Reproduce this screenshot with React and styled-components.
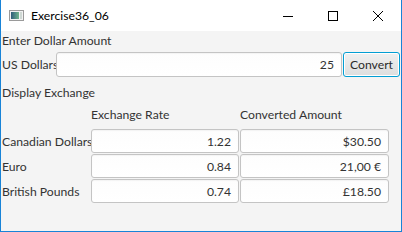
import { Fragment } from "react";
import styled, { createGlobalStyle } from "styled-components";

const GlobalStyle = createGlobalStyle`
  html, body {
    margin: 0;
    padding: 0;
    background: #ffffff;
  }
  * {
    box-sizing: border-box;
  }
`;

const Window = styled.div`
  width: 402px;
  height: 232px;
  border: 1px solid #1883d7;
  border-top: none;
  background: #f4f4f4;
  display: flex;
  flex-direction: column;
  font-family: Lato, "Noto Sans", sans-serif;
  font-size: 12.2px;
  color: #333333;
  overflow: hidden;
`;

const TitleBar = styled.div`
  height: 31px;
  background: #ffffff;
  display: flex;
  align-items: center;
  padding-left: 8px;
  padding-right: 1px;
`;

const AppIcon = styled.svg`
  width: 15px;
  height: 11px;
  margin-right: 7px;
`;

const Title = styled.span`
  flex: 1;
  color: #000000;
`;

const CaptionButton = styled.div`
  width: 45px;
  height: 30px;
  display: flex;
  align-items: center;
  justify-content: center;
`;

const Content = styled.div`
  padding: 0 0 0 1px;
  display: flex;
  flex-direction: column;
`;

const SectionLabel = styled.div`
  height: ${(p) => p.$h}px;
  display: flex;
  align-items: center;
`;

const InputRow = styled.div`
  display: flex;
  align-items: center;
  height: 25px;
  margin-top: 2px;
  margin-bottom: 6px;
`;

const RowLabel = styled.span`
  width: 54px;
  white-space: nowrap;
`;

const Field = styled.div`
  height: ${(p) => p.$h || 25}px;
  border: 1px solid #c4c4c4;
  border-radius: 3px;
  background: linear-gradient(#fdfdfd, #ffffff);
  box-shadow: inset 0 1px 1px rgba(0, 0, 0, 0.04);
  display: flex;
  align-items: center;
  justify-content: flex-end;
  padding-right: 7px;
  color: #333333;
`;

const AmountField = styled(Field)`
  flex: 1;
`;

const ConvertButton = styled.div`
  width: 57px;
  height: 25px;
  margin-left: 1px;
  margin-right: 1px;
  border: 1px solid #039ed3;
  border-radius: 3px;
  box-shadow: inset 0 0 0 1px #ffffff;
  background: linear-gradient(#f0f0f0, #dedede);
  display: flex;
  align-items: center;
  justify-content: center;
  color: #2a2a2a;
`;

const Grid = styled.div`
  display: grid;
  grid-template-columns: 88px 148px 149px;
  grid-auto-rows: 24px;
  column-gap: 1px;
  row-gap: 1px;
  margin-top: 2px;
`;

const Header = styled.div`
  display: flex;
  align-items: center;
  height: 20px;
`;

const CellLabel = styled.div`
  display: flex;
  align-items: center;
  white-space: nowrap;
`;

const rows = [
  { name: "Canadian Dollars", rate: "1.22", amount: "$30.50" },
  { name: "Euro", rate: "0.84", amount: "21,00 €" },
  { name: "British Pounds", rate: "0.74", amount: "£18.50" },
];

export default function App() {
  return (
    <>
      <GlobalStyle />
      <Window>
        <TitleBar>
          <AppIcon viewBox="0 0 15 11">
            <defs>
              <linearGradient id="pic" x1="0" x2="1" y1="0" y2="0">
                <stop offset="0" stopColor="#2f5d7a" />
                <stop offset="1" stopColor="#6fb58c" />
              </linearGradient>
            </defs>
            <rect x="0.5" y="0.5" width="14" height="10" fill="#f2f2f2" stroke="#9a9a9a" />
            <rect x="2" y="2" width="8" height="7" fill="url(#pic)" />
            <rect x="11" y="2" width="2" height="7" fill="#cfd8d4" />
          </AppIcon>
          <Title>Exercise36_06</Title>
          <CaptionButton>
            <svg width="10" height="10" viewBox="0 0 10 10">
              <line x1="0" y1="5.5" x2="10" y2="5.5" stroke="#000" strokeWidth="1" />
            </svg>
          </CaptionButton>
          <CaptionButton>
            <svg width="10" height="10" viewBox="0 0 10 10">
              <rect x="0.5" y="0.5" width="9" height="9" fill="none" stroke="#000" strokeWidth="1" />
            </svg>
          </CaptionButton>
          <CaptionButton>
            <svg width="10" height="10" viewBox="0 0 10 10">
              <path d="M0 0 L10 10 M10 0 L0 10" stroke="#000" strokeWidth="1" />
            </svg>
          </CaptionButton>
        </TitleBar>
        <Content>
          <SectionLabel $h={19}>Enter Dollar Amount</SectionLabel>
          <InputRow>
            <RowLabel>US Dollars</RowLabel>
            <AmountField>25</AmountField>
            <ConvertButton>Convert</ConvertButton>
          </InputRow>
          <SectionLabel $h={19}>Display Exchange</SectionLabel>
          <Grid>
            <div />
            <Header>Exchange Rate</Header>
            <Header>Converted Amount</Header>
            {rows.map((r) => (
              <Fragment key={r.name}>
                <CellLabel>{r.name}</CellLabel>
                <Field $h={24}>{r.rate}</Field>
                <Field $h={24}>{r.amount}</Field>
              </Fragment>
            ))}
          </Grid>
        </Content>
      </Window>
    </>
  );
}
